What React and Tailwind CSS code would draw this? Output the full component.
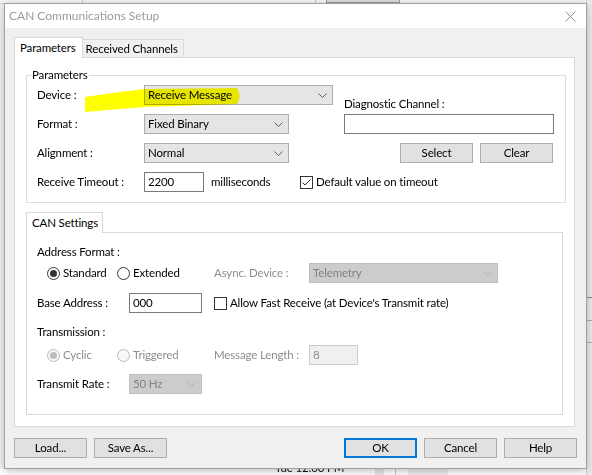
import React from "react";

const font = "font-['Lato',sans-serif] text-[11.5px] tracking-[-0.15px] leading-[16px]";

function Chevron({ disabled }) {
  return (
    <svg width="9" height="5" viewBox="0 0 9 5" className="shrink-0">
      <path
        d="M0.5 0.5 L4.5 4.5 L8.5 0.5"
        fill="none"
        stroke={disabled ? "#b0b0b0" : "#5f5f5f"}
        strokeWidth="1"
      />
    </svg>
  );
}

function Combo({ value, className = "", disabled }) {
  return (
    <div
      className={`h-[20px] flex items-center justify-between pl-[3px] pr-[5px] border ${
        disabled
          ? "bg-[#cccccc] border-[#bfbfbf] text-[#838383]"
          : "bg-[#e5e5e5] border-[#adadad] text-black"
      } ${className}`}
    >
      <span className="whitespace-nowrap">{value}</span>
      <Chevron disabled={disabled} />
    </div>
  );
}

function TextBox({ value = "", className = "", disabled }) {
  return (
    <div
      className={`h-[20px] flex items-center pl-[3px] border ${
        disabled
          ? "bg-[#f0f0f0] border-[#cccccc] text-[#8d8d8d]"
          : "bg-white border-[#7a7a7a] text-black"
      } ${className}`}
    >
      {value}
    </div>
  );
}

function Button({ children, className = "", focused }) {
  return (
    <button
      className={`h-[20px] bg-[#e1e1e1] flex items-center justify-center whitespace-nowrap ${
        focused ? "border-2 border-[#0078d7]" : "border border-[#adadad]"
      } ${className}`}
    >
      {children}
    </button>
  );
}

function Radio({ checked, disabled, label, className = "" }) {
  return (
    <div className={`flex items-center whitespace-nowrap ${className}`}>
      <span
        className={`w-[13px] h-[13px] rounded-full border flex items-center justify-center ${
          disabled ? "border-[#bcbcbc] bg-[#f7f7f7]" : "border-[#333333] bg-white"
        }`}
      >
        {checked && (
          <span
            className={`w-[7px] h-[7px] rounded-full ${
              disabled ? "bg-[#bcbcbc]" : "bg-[#333333]"
            }`}
          />
        )}
      </span>
      <span className={`ml-[3px] ${disabled ? "text-[#8d8d8d]" : ""}`}>{label}</span>
    </div>
  );
}

function Checkbox({ checked, label, className = "" }) {
  return (
    <div className={`flex items-center whitespace-nowrap ${className}`}>
      <span className="w-[13px] h-[13px] border border-[#333333] bg-white flex items-center justify-center">
        {checked && (
          <svg width="11" height="11" viewBox="0 0 11 11">
            <path d="M1.5 5.5 L4 8 L9.5 2.5" fill="none" stroke="#333333" strokeWidth="1" />
          </svg>
        )}
      </span>
      <span className="ml-[3px]">{label}</span>
    </div>
  );
}

export default function App() {
  return (
    <div className={`relative w-[592px] h-[475px] overflow-hidden bg-[#f3f3f3] text-black ${font}`}>
      {/* window behind the dialog */}
      <div className="absolute left-0 top-[-10px] w-[592px] h-[14px] bg-[#f5f5f5] border-b border-[#d5d5d5]">
        <span className="absolute left-[37px] top-[-3px] text-[#222]">Section</span>
        <span className="absolute left-[88px] top-[-3px] text-[#222]">Name</span>
        <span className="absolute left-[82px] top-0 h-[14px] border-l border-[#c8c8c8]" />
        <span className="absolute left-[315px] top-0 h-[14px] border-l border-[#c8c8c8]" />
        <span className="absolute left-[326px] top-[-4px] w-[74px] h-[17px] bg-[#dcdcdc] border border-[#9a9a9a] text-center text-[#1a1a6e] leading-[14px]">
          Select
        </span>
      </div>
      <div className="absolute left-0 top-[468px] w-[592px] h-[7px] bg-white">
        <span className="absolute left-[275px] top-[-8px] text-[#111]">Tue 12:00 PM</span>
        <span className="absolute left-[375px] top-0 w-[9px] h-[7px] bg-[#e6e6e6]" />
        <span className="absolute left-[395px] top-0 h-[7px] border-l border-[#c8c8c8]" />
        <span className="absolute left-[408px] top-0 w-[40px] h-[7px] bg-[#ececec]" />
      </div>
      <div className="absolute left-[586px] top-0 w-[6px] h-[475px] bg-[#ebebeb] border-l border-[#d0d0d0]">
        <span className="absolute left-0 top-[297px] w-[6px] border-t border-[#8a8a8a]" />
        <span className="absolute left-0 top-[320px] w-[6px] border-t border-[#b0b0b0]" />
        <span className="absolute left-0 top-[342px] w-[6px] border-t border-[#b0b0b0]" />
      </div>

      {/* dialog */}
      <div className="absolute left-[4px] top-[3px] w-[583px] h-[466px] border border-[#a0a0a0] bg-[#f0f0f0] shadow-[0_2px_8px_rgba(0,0,0,0.25)] flex flex-col">
        <div className="h-[24px] bg-white flex items-center justify-between pl-[4px] pr-[10px]">
          <span className="text-[#9a9a9a] text-[12px] tracking-normal">CAN Communications Setup</span>
          <svg width="11" height="11" viewBox="0 0 11 11">
            <path d="M0.5 0.5 L10.5 10.5 M10.5 0.5 L0.5 10.5" stroke="#8f8f8f" strokeWidth="1" />
          </svg>
        </div>

        <div className="pl-[9px] pt-[9px]">
          {/* tab strip */}
          <div className="flex items-end h-[20px]">
            <div className="relative z-10 h-[21px] -mb-px bg-white border border-b-0 border-[#d9d9d9] pl-[5px] pr-[6px] leading-[19px] whitespace-nowrap">
              Parameters
            </div>
            <div className="h-[18px] bg-[#f0f0f0] border border-l-0 border-b-0 border-[#d9d9d9] pl-[3px] pr-[5px] leading-[17px] whitespace-nowrap">
              Received Channels
            </div>
          </div>

          {/* tab page */}
          <div className="w-[561px] h-[370px] bg-white border border-[#d9d9d9] pl-[11px] pt-[17px]">
            {/* Parameters group */}
            <div className="relative w-[540px] h-[128px] border border-[#dcdcdc] pl-[10px] pt-[9px]">
              <span className="absolute left-[5px] top-[-9px] bg-white pr-[1px]">Parameters</span>
              <div className="flex">
                <div className="w-[296px] flex flex-col">
                  <div className="flex items-center h-[20px]">
                    <span className="w-[107px]">Device :</span>
                    <Combo value="Receive Message" className="w-[189px]" />
                  </div>
                  <div className="flex items-center h-[20px] mt-[9px]">
                    <span className="w-[107px]">Format :</span>
                    <Combo value="Fixed Binary" className="w-[145px]" />
                  </div>
                  <div className="flex items-center h-[20px] mt-[9px]">
                    <span className="w-[107px]">Alignment :</span>
                    <Combo value="Normal" className="w-[145px]" />
                  </div>
                </div>
                <div className="ml-[11px] w-[210px] flex flex-col pt-[11px]">
                  <span className="h-[16px] whitespace-nowrap">Diagnostic Channel :</span>
                  <TextBox className="w-[210px] mt-[2px]" />
                  <div className="flex justify-end gap-[7px] pr-[1px] mt-[9px]">
                    <Button className="w-[73px]">Select</Button>
                    <Button className="w-[73px]">Clear</Button>
                  </div>
                </div>
              </div>
              <div className="flex items-center h-[20px] mt-[9px]">
                <span className="w-[107px]">Receive Timeout :</span>
                <TextBox value="2200" className="w-[60px]" />
                <span className="w-[96px] pl-[7px]">milliseconds</span>
                <Checkbox checked label="Default value on timeout" />
              </div>
            </div>

            {/* CAN Settings */}
            <div className="mt-[9px] flex">
              <div className="relative z-10 w-[77px] h-[21px] -mb-px bg-white border border-b-0 border-[#d9d9d9] pl-[5px] leading-[19px] whitespace-nowrap">
                CAN Settings
              </div>
            </div>
            <div className="w-[537px] h-[183px] border border-[#d9d9d9] pl-[10px] pt-[11px] flex flex-col">
              <span className="h-[16px]">Address Format :</span>
              <div className="flex items-center h-[20px] mt-[3px] pl-[10px]">
                <Radio checked label="Standard" className="w-[70px]" />
                <Radio label="Extended" className="w-[97px]" />
                <span className="w-[95px] text-[#8d8d8d] whitespace-nowrap">Async. Device :</span>
                <Combo value="Telemetry" disabled className="w-[189px]" />
              </div>
              <div className="flex items-center h-[20px] mt-[10px]">
                <span className="w-[92px]">Base Address :</span>
                <TextBox value="000" className="w-[73px]" />
                <Checkbox label="Allow Fast Receive (at Device's Transmit rate)" className="ml-[12px]" />
              </div>
              <span className="h-[16px] mt-[11px]">Transmission :</span>
              <div className="flex items-center h-[20px] mt-[5px] pl-[10px]">
                <Radio checked disabled label="Cyclic" className="w-[70px]" />
                <Radio disabled label="Triggered" className="w-[97px]" />
                <span className="w-[95px] text-[#8d8d8d] whitespace-nowrap">Message Length :</span>
                <TextBox value="8" disabled className="w-[49px]" />
              </div>
              <div className="flex items-center h-[20px] mt-[9px]">
                <span className="w-[92px]">Transmit Rate :</span>
                <Combo value="50 Hz" disabled className="w-[73px]" />
              </div>
            </div>
          </div>

          {/* bottom buttons */}
          <div className="w-[563px] flex justify-between mt-[11px]">
            <div className="flex gap-[7px]">
              <Button className="w-[73px]">Load...</Button>
              <Button className="w-[73px]">Save As...</Button>
            </div>
            <div className="flex gap-[7px]">
              <Button focused className="w-[73px]">OK</Button>
              <Button className="w-[73px]">Cancel</Button>
              <Button className="w-[73px]">Help</Button>
            </div>
          </div>
        </div>
      </div>

      {/* yellow marker stroke over the Device row */}
      <svg
        className="absolute left-0 top-0 mix-blend-multiply pointer-events-none"
        width="592"
        height="475"
        viewBox="0 0 592 475"
      >
        <path
          d="M85 97 L120 92 L145 89 L237 88 Q242 96 237 104 L175 106 L145 107 L120 109 L85 112 Z"
          fill="#ffff00"
        />
      </svg>
    </div>
  );
}
